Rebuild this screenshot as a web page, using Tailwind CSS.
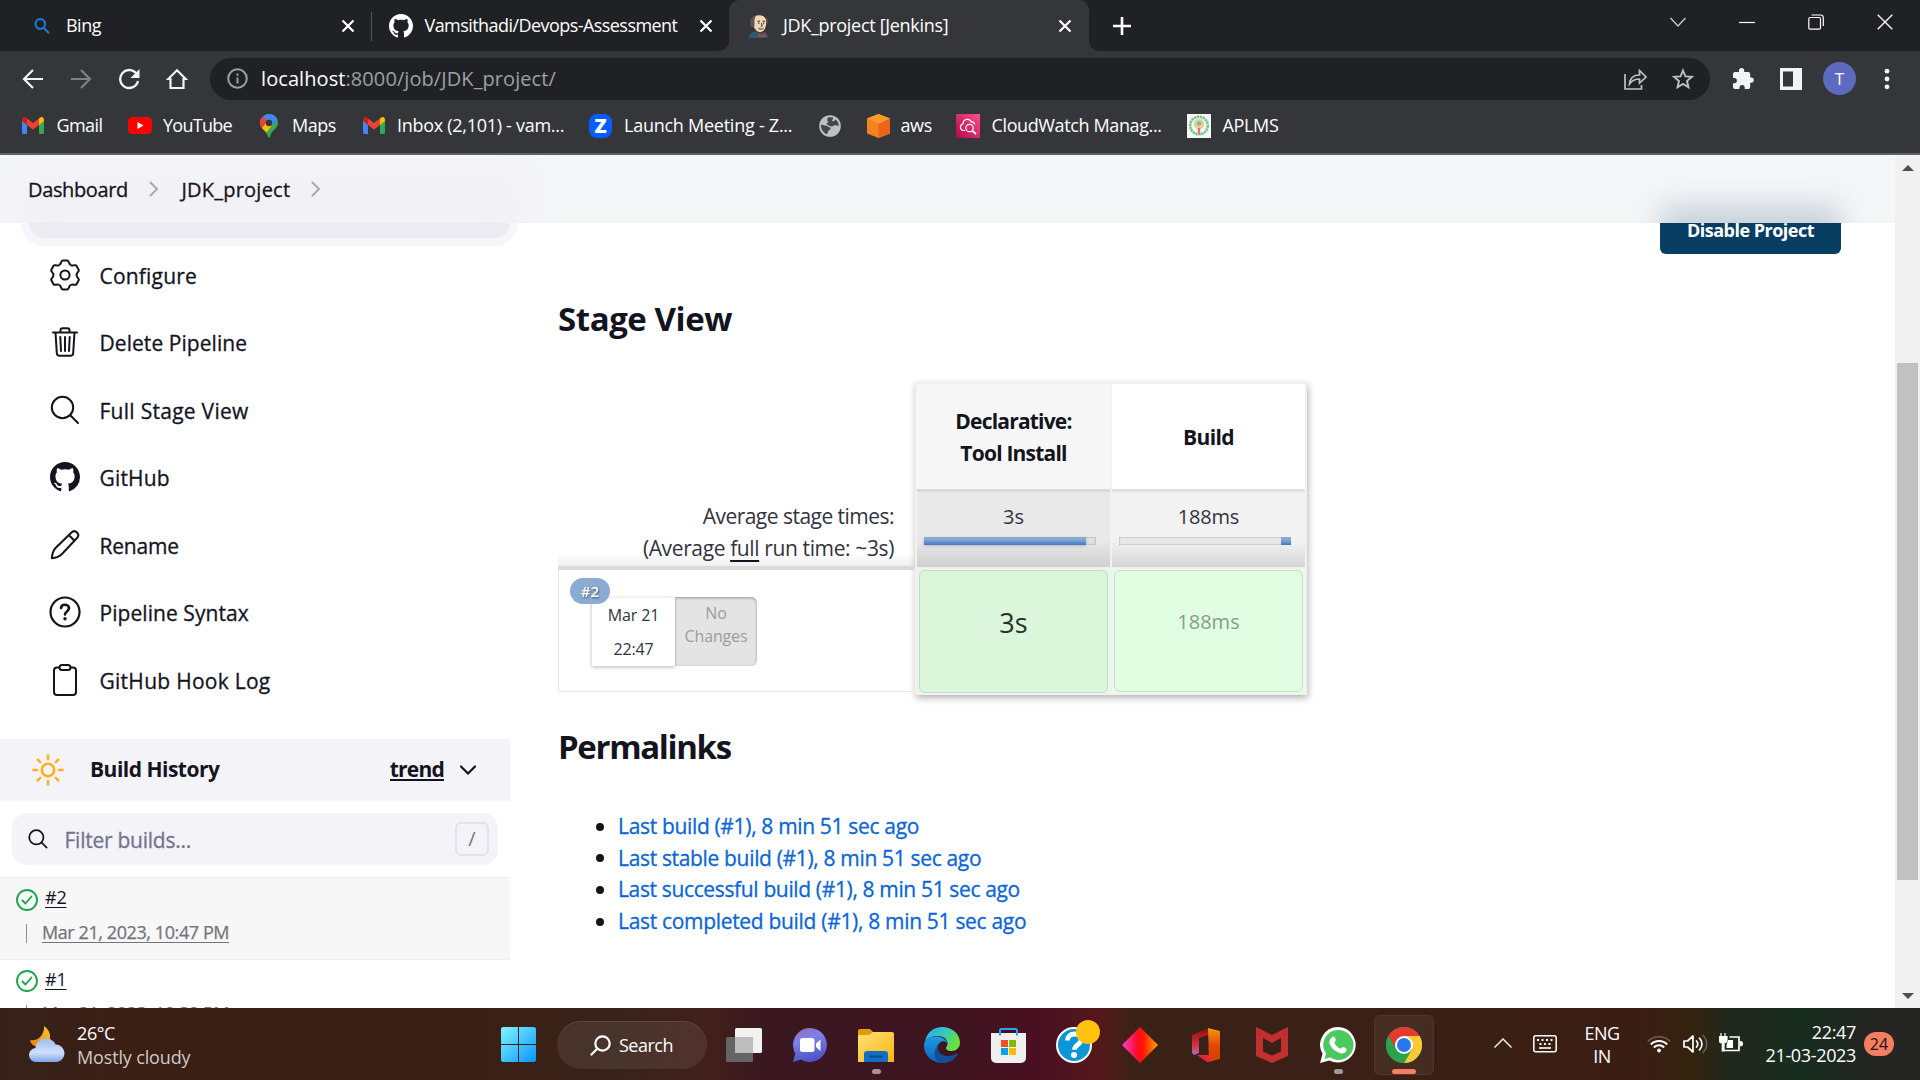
<!DOCTYPE html>
<html lang="en">
<head>
<meta charset="utf-8">
<title>JDK_project [Jenkins]</title>
<script src="https://cdn.jsdelivr.net/npm/@tailwindcss/browser@4"></script>
</head>
<body class="w-[1920px] h-[1080px] overflow-hidden flex flex-col bg-white font-['Open_Sans','Noto_Sans',sans-serif] text-[#14141f]">

<svg class="hidden">
  <symbol id="github" viewBox="0 0 16 16"><path fill="currentColor" d="M8 0C3.58 0 0 3.58 0 8c0 3.54 2.29 6.53 5.47 7.59.4.07.55-.17.55-.38 0-.19-.01-.82-.01-1.49-2.01.37-2.53-.49-2.69-.94-.09-.23-.48-.94-.82-1.13-.28-.15-.68-.52-.01-.53.63-.01 1.08.58 1.23.82.72 1.21 1.87.87 2.33.66.07-.52.28-.87.51-1.07-1.78-.2-3.64-.89-3.64-3.95 0-.87.31-1.59.82-2.15-.08-.2-.36-1.02.08-2.12 0 0 .67-.21 2.2.82.64-.18 1.32-.27 2-.27s1.36.09 2 .27c1.53-1.04 2.2-.82 2.2-.82.44 1.1.16 1.92.08 2.12.51.56.82 1.27.82 2.15 0 3.07-1.87 3.75-3.65 3.95.29.25.54.73.54 1.48 0 1.07-.01 1.93-.01 2.2 0 .21.15.46.55.38A8.01 8.01 0 0 0 16 8c0-4.42-3.58-8-8-8z"/></symbol>
  <symbol id="gmail" viewBox="0 0 22 17">
    <path fill="#4285f4" d="M0 3v12.500C0 16.300.700 17 1.500 17H5V7z"/>
    <path fill="#34a853" d="M22 3v12.500c0 .800-.700 1.500-1.500 1.500H17V7z"/>
    <path fill="#c5221f" d="M0 2.500C0 .300 2.400-.700 4 .600L5 1.500V8L0 4z"/>
    <path fill="#fbbc04" d="M22 2.500C22 .300 19.600-.700 18 .600L17 1.500V8l5-4z"/>
    <path fill="#ea4335" d="M5 1.500l6 4.600 6-4.600V8l-6 4.500L5 8z"/>
  </symbol>
  <symbol id="x" viewBox="0 0 14 14"><path d="M1.500 1.500l11 11M12.500 1.500l-11 11" stroke="#fff" stroke-width="2.200" fill="none"/></symbol>
  <symbol id="lens" viewBox="0 0 30 30"><g fill="none" stroke="currentColor" stroke-linecap="round"><circle cx="12.500" cy="12.500" r="10.700"/><path d="M20.500 20.500l7.500 7.500"/></g></symbol>
  <symbol id="ok" viewBox="0 0 22 22"><g fill="none" stroke="#1ea64b" stroke-width="1.900" stroke-linecap="round" stroke-linejoin="round"><circle cx="11" cy="11" r="10"/><path d="M6.500 11.500l3 3 6-7"/></g></symbol>
  <symbol id="sep" viewBox="0 0 10 16"><path d="M1.500 1.500L8 8l-6.500 6.500" fill="none" stroke="#a9a7bb" stroke-width="2" stroke-linecap="round"/></symbol>
</svg>

<!-- Tab strip -->
<div class="h-[51px] shrink-0 bg-[#202124] flex text-white text-[18px] whitespace-nowrap">
  <div class="w-[371px] flex items-center pl-[34px] pr-[16px]">
    <svg class="w-[16px] h-[16px] mr-[16px]" viewBox="0 0 16 16" fill="none" stroke="#1a78d0" stroke-width="2.200"><circle cx="6.300" cy="6" r="4.800"/><path d="M9.500 9.800l5.500 5.400"/></svg>
    <span class="flex-1 tracking-[-0.028em]">Bing</span>
    <svg class="w-[14px] h-[14px]"><use href="#x"/></svg>
  </div>
  <div class="w-px h-[29px] self-center bg-[#56585c] mt-px"></div>
  <div class="w-[357px] flex items-center pl-[17px] pr-[16px]">
    <svg class="w-[24px] h-[24px] mr-[11.500px]"><use href="#github"/></svg>
    <span class="flex-1 tracking-[-0.031em]">Vamsithadi/Devops-Assessment</span>
    <svg class="w-[14px] h-[14px]"><use href="#x"/></svg>
  </div>
  <div class="w-[360px] relative flex items-center bg-[#35363a] rounded-t-[10px] pl-[19px] pr-[17px]">
    <svg class="absolute -left-[10px] bottom-0 w-[10px] h-[10px]" viewBox="0 0 10 10"><path d="M10 0v10H0A10 10 0 0 0 10 0z" fill="#35363a"/></svg>
    <svg class="absolute -right-[10px] bottom-0 w-[10px] h-[10px]" viewBox="0 0 10 10"><path d="M0 0v10h10A10 10 0 0 1 0 0z" fill="#35363a"/></svg>
    <svg class="w-[22px] h-[24px] mr-[13px]" viewBox="0 0 22 24">
      <path d="M1 24c0-4 3-6 6-6.500l8 0c3 .5 5 2.500 5 6.500z" fill="#2f5873"/>
      <path d="M4 9C3 4 6 .8 11 .8c5.500 0 8 3.200 7.700 8-.2 5-2 9-6 9.700C8.500 19 5 14 4 9z" fill="#f0d6b7" stroke="#2a2422" stroke-width=".9"/>
      <path d="M3.500 13.500C.5 7 3 2 8.500 1 6 4 6.500 8 6.500 12z" fill="#5d5350"/>
      <path d="M18.200 4c1 2 .9 4 .6 6" stroke="#5d5350" stroke-width="1.600" fill="none"/>
      <path d="M9.500 7.500l2.500-.6M14.500 7l2.500.4M10 9.200h1.500M15 9.200h1.300M13.500 9l.8 3-1.500.3M10.500 14.500c2 1 4 .6 5-.4" stroke="#3a2f2a" stroke-width="1" fill="none"/>
      <path d="M10 19.500l3.500 1.700 3.500-2 .6 4-3.800-1-3.500 1.300z" fill="#d33833"/>
    </svg>
    <span class="flex-1 tracking-[-0.017em]">JDK_project [Jenkins]</span>
    <svg class="w-[14px] h-[14px]"><use href="#x"/></svg>
  </div>
  <div class="flex-1 flex items-center pl-[23px]">
    <svg class="w-[20px] h-[20px]" viewBox="0 0 20 20"><path d="M10 1v18M1 10h18" stroke="#fff" stroke-width="2.600"/></svg>
  </div>
  <div class="flex items-center gap-[53px] pr-[27px] pb-[8px]">
    <svg class="w-[16px] h-[16px]" viewBox="0 0 16 16"><path d="M.5 4L8 12l7.500-8" stroke="#cfcfd1" stroke-width="1.200" fill="none"/></svg>
    <svg class="w-[16px] h-[16px]" viewBox="0 0 16 16"><path d="M0 8.500h16" stroke="#fff" stroke-width="1.200"/></svg>
    <svg class="w-[16px] h-[16px]" viewBox="0 0 16 16" fill="none" stroke="#fff" stroke-width="1.200"><rect x=".8" y="3.500" width="11.700" height="11.700" rx="1.500"/><path d="M3.500 1h9a2.800 2.800 0 0 1 2.800 2.800V12"/></svg>
    <svg class="w-[16px] h-[16px]" viewBox="0 0 16 16"><path d="M.7.7l14.600 14.600M15.300.7L.7 15.300" stroke="#fff" stroke-width="1.300"/></svg>
  </div>
</div>

<!-- Toolbar -->
<div class="h-[55px] shrink-0 bg-[#35363a] flex items-center">
  <div class="w-[210px] flex items-center gap-[26px] pl-[22px]">
    <svg class="w-[22px] h-[22px]" viewBox="0 0 22 22" fill="none" stroke="#f1f3f4" stroke-width="2.200"><path d="M21 11H3M11 2l-9 9 9 9"/></svg>
    <svg class="w-[22px] h-[22px]" viewBox="0 0 22 22" fill="none" stroke="#7f8185" stroke-width="2.200"><path d="M1 11h18M11 2l9 9-9 9"/></svg>
    <svg class="w-[22px] h-[22px]" viewBox="0 0 22 22"><path d="M19 6.500A9 9 0 1 0 20 13" fill="none" stroke="#f1f3f4" stroke-width="2.400"/><path d="M21.500 1v9h-9z" fill="#f1f3f4"/></svg>
    <svg class="w-[22px] h-[22px]" viewBox="0 0 22 22"><path d="M4.500 20V11H2.200L11 2.200 19.800 11h-2.300v9z" fill="none" stroke="#f1f3f4" stroke-width="2.200"/></svg>
  </div>
  <div class="w-[1500px] h-[42px] rounded-full bg-[#202124] flex items-center pl-[17px] pr-[16px]">
    <svg class="w-[21px] h-[21px] mr-[13px]" viewBox="0 0 21 21" fill="none" stroke="#9aa0a6" stroke-width="2"><circle cx="10.500" cy="10.500" r="9.300"/><path d="M10.500 9.500v6M10.500 5.500v2.200"/></svg>
    <div class="flex-1 text-[20px] text-[#9aa0a6] tracking-[0.004em]"><span class="text-white">localhost</span>:8000/job/JDK_project/</div>
    <svg class="w-[23px] h-[22px] mr-[25px]" viewBox="0 0 23 22" fill="none" stroke="#bdc1c6" stroke-width="1.700"><path d="M1 6v15h16.500v-4"/><path d="M5.500 16C6 10 9.500 7 15.500 7V2.500L22 9l-6.500 6V11C11 11 8 12.500 5.500 16z"/></svg>
    <svg class="w-[22px] h-[22px]" viewBox="0 0 22 22"><path d="M11 2.500l2.500 5.900 6.300.5-4.800 4.100 1.500 6.200L11 15.900l-5.500 3.300L7 13 2.200 8.900l6.300-.5z" fill="none" stroke="#bdc1c6" stroke-width="1.900"/></svg>
  </div>
  <div class="flex items-center pl-[22px]">
    <svg class="w-[22px] h-[22px] mr-[26px] -mt-[2px]" viewBox="0 0 22 22" fill="#f1f3f4"><path d="M7 3.500a2.600 2.600 0 0 1 5.200 0V5h4a2 2 0 0 1 2 2v3.500h1a2.600 2.600 0 0 1 0 5.200h-1V20a2 2 0 0 1-2 2h-3.500v-1.500a2.600 2.600 0 0 0-5.200 0V22H3a2 2 0 0 1-2-2v-3.800h1.300a2.600 2.600 0 0 0 0-5.200H1V7a2 2 0 0 1 2-2h4z"/></svg>
    <svg class="w-[22px] h-[22px] mr-[21px]" viewBox="0 0 22 22"><rect x="0" y="0" width="22" height="22" fill="#f1f3f4"/><rect x="3" y="3.500" width="10" height="15" fill="#35363a"/></svg>
    <div class="size-[33px] rounded-full bg-[#5c6bc0] text-white text-[17px] flex items-center justify-center">T</div>
    <svg class="w-[6px] h-[22px] ml-[28px]" viewBox="0 0 6 22" fill="#f1f3f4"><circle cx="3" cy="3.200" r="2.400"/><circle cx="3" cy="11" r="2.400"/><circle cx="3" cy="18.800" r="2.400"/></svg>
  </div>
</div>

<!-- Bookmarks -->
<div class="h-[49px] shrink-0 bg-[#35363a] border-b-2 border-[#5f6166] flex items-center pl-[22px] pb-[8px] text-white text-[18px] whitespace-nowrap">
  <div class="w-[106px] flex items-center gap-[12.500px] tracking-[-0.032em]"><svg class="w-[22px] h-[17px]"><use href="#gmail"/></svg>Gmail</div>
  <div class="w-[132px] flex items-center gap-[11px] tracking-[-0.040em]"><svg class="w-[24px] h-[17px]" viewBox="0 0 24 17"><rect width="24" height="17" rx="4.500" fill="#f00"/><path d="M9.500 5v7l6-3.500z" fill="#fff"/></svg>YouTube</div>
  <div class="w-[103px] flex items-center gap-[14px] tracking-[-0.025em]">
    <svg class="w-[18px] h-[24px]" viewBox="0 0 18 24"><defs><clipPath id="pin"><path d="M9 0a9 9 0 0 1 9 9c0 6-7 7-8 14-.2 1-1.800 1-2 0C7 16 0 15 0 9a9 9 0 0 1 9-9z"/></clipPath></defs><g clip-path="url(#pin)"><rect width="18" height="24" fill="#34a853"/><path d="M0 0h18L3 18 0 14z" fill="#4285f4"/><path d="M0 5l3-3 6 7-7 8-2-2z" fill="#ea4335"/><path d="M1 15L14 0l4 4L6 19z" fill="#fbbc04"/><path d="M5 0h13v5l-6 7-6-7z" fill="#4285f4"/></g><circle cx="9" cy="9" r="3.200" fill="#35363a"/></svg>Maps</div>
  <div class="w-[226px] flex items-center gap-[12px] tracking-[-0.016em]"><svg class="w-[22px] h-[17px]"><use href="#gmail"/></svg>Inbox (2,101) - vam...</div>
  <div class="w-[230px] flex items-center gap-[12px] tracking-[-0.014em]"><span class="w-[23px] h-[24px] rounded-[8px] bg-[#0b5cff] text-[20px] leading-none font-extrabold flex items-center justify-center">Z</span>Launch Meeting - Z...</div>
  <svg class="w-[22px] h-[22px] mr-[26px]" viewBox="0 0 22 22"><circle cx="11" cy="11" r="10.800" fill="#bdc1c6"/><path d="M2 9.500l5 1.300c2 .3 2.500 1.500 4.200 1.700.8 1.500-.2 2.500-1.700 3-.5 1.300-.7 2.300-1.500 3.800C4.200 18 1.700 14 2 9.500zM9.500 2.200l4.500.4c.8 1.200-.8 2-1 3.200.9 1 2.800 0 3.500-1.300 2.200 1.500 3.500 4 3.300 6.500-1.300-.6-2.600-1-4.300-.8-1.500.3-1.500 1.300-3 1.200-1.800-.2-3-1-4.600-1.900-1-.8.400-1.800 1.600-2.200C8.200 6 7.500 3.500 9.500 2.200z" fill="#45474b"/></svg>
  <div class="w-[89px] flex items-center gap-[10.500px] tracking-[-0.022em]"><svg class="w-[23px] h-[24px]" viewBox="0 0 23 24"><path d="M11.500 0L23 4.500v15L11.500 24 0 19.500v-15z" fill="#f58220"/><path d="M11.500 0L23 4.500 11.500 10 0 4.500z" fill="#fa9a2c"/><path d="M11.500 10L23 4.500v15L11.500 24z" fill="#ea641a"/></svg>aws</div>
  <div class="w-[231px] flex items-center gap-[11.500px] tracking-[-0.021em]"><svg class="w-[24px] h-[24px]" viewBox="0 0 24 24"><defs><linearGradient id="cw" x1="0" y1="1" x2="1" y2="0"><stop stop-color="#b0084d"/><stop offset="1" stop-color="#ff4f8b"/></linearGradient></defs><rect width="24" height="24" fill="url(#cw)"/><g fill="none" stroke="#fff" stroke-width="1.200"><path d="M9 16.500H7.500a3.300 3.300 0 0 1-.5-6.500c0-5 6.500-6.500 8.300-2 2-.5 3.200.8 3.200 2.500"/><circle cx="13.500" cy="14" r="3.700"/><path d="M16.200 16.800L20 20" stroke-width="1.800"/></g></svg>CloudWatch Manag...</div>
  <div class="flex items-center gap-[11.500px] tracking-[-0.019em]"><svg class="w-[24px] h-[24px]" viewBox="0 0 24 24"><rect width="24" height="24" fill="#f8f8f4"/><circle cx="12" cy="11.500" r="8.800" fill="none" stroke="#6cc896" stroke-width="2.600" stroke-dasharray="2.400 .6"/><circle cx="12" cy="10" r="5.300" fill="#eccba0"/><circle cx="12" cy="9.500" r="2.300" fill="#7ec08a"/><path d="M10.800 14h2.400v6h-2.400z" fill="#e4786c"/></svg>APLMS</div>
</div>

<!-- Page -->
<div class="h-[853px] shrink-0 relative isolate flex overflow-hidden bg-white">
  <!-- Sidebar -->
  <div class="w-[510px] shrink-0 flex flex-col">
    <div class="h-[86px] shrink-0 flex pl-[28.500px]"><div class="w-[481.500px] h-[83px] shrink-0 rounded-[15px] bg-[#ebecf2] shadow-[0_0_0_8px_#f6f6fa]"></div></div>
    <nav class="text-[21px] text-[#14141f] flex flex-col whitespace-nowrap">
      <a class="h-[67.500px] flex items-center gap-[19.500px] pl-[50px] tracking-[0.009em]"><svg class="w-[30px] h-[32px]" viewBox="-15 -16 30 32"><defs><path id="lobe" d="M-5.750-9.960Q-4.600-10.600-3.900-12.600Q-3.400-14.500-2.200-14.500L2.200-14.500Q3.400-14.500 3.900-12.600Q4.600-10.600 5.750-9.960"/></defs><g fill="none" stroke="#14141f" stroke-width="2"><use href="#lobe"/><use href="#lobe" transform="rotate(60)"/><use href="#lobe" transform="rotate(120)"/><use href="#lobe" transform="rotate(180)"/><use href="#lobe" transform="rotate(240)"/><use href="#lobe" transform="rotate(300)"/><circle r="4.600"/></g></svg><span class="pt-[4px] [-webkit-text-stroke:0.300px]">Configure</span></a>
      <a class="h-[67.500px] flex items-center gap-[19.500px] pl-[50px] tracking-[0.003em]"><svg class="w-[30px] h-[30px]" viewBox="0 0 30 30" fill="none" stroke="#14141f" stroke-width="2" stroke-linecap="round" stroke-linejoin="round"><path d="M3 5.500h24M5.500 5.500l1.300 20.500c.1 1.700 1 2.800 2.700 2.800h11c1.700 0 2.600-1.100 2.700-2.800L24.500 5.500M10.500 5.500V3.300C10.500 2 11.300 1.200 12.500 1.200h5c1.200 0 2 .8 2 2.100v2.200M15 10v14M10.300 10l.7 14M19.700 10l-.7 14"/></svg><span class="pt-[3px] [-webkit-text-stroke:0.300px]">Delete Pipeline</span></a>
      <a class="h-[67.500px] flex items-center gap-[19.500px] pl-[50px] tracking-[0.013em]"><svg class="w-[30px] h-[30px] stroke-2"><use href="#lens"/></svg><span class="pt-[4px] [-webkit-text-stroke:0.300px]">Full Stage View</span></a>
      <a class="h-[67.500px] flex items-center gap-[19.500px] pl-[50px] tracking-[0.008em]"><svg class="w-[30px] h-[30px]"><use href="#github"/></svg><span class="pt-[3px] [-webkit-text-stroke:0.300px]">GitHub</span></a>
      <a class="h-[67.500px] flex items-center gap-[19.500px] pl-[50px] tracking-[-0.010em]"><svg class="w-[30px] h-[30px]" viewBox="0 0 30 30" fill="none" stroke="#14141f" stroke-width="2" stroke-linecap="round" stroke-linejoin="round"><path d="M1.800 28.200C2.200 24 3.200 20.500 5.500 18L21.500 2.500c1.800-1.700 4-1.500 5.500 0s1.700 3.700 0 5.500L12 24c-2.500 2.500-6 3.800-10.200 4.200zM19 5.200l5.500 5.500"/></svg><span class="pt-[4px] [-webkit-text-stroke:0.300px]">Rename</span></a>
      <a class="h-[67.500px] flex items-center gap-[18.500px] pl-[49px] tracking-[0.003em]"><svg class="w-[32px] h-[32px]" viewBox="0 0 32 32" fill="none" stroke="#14141f" stroke-width="2.200" stroke-linecap="round"><circle cx="16" cy="16" r="14.500"/><path d="M12 12c.2-2 1.700-3.300 4-3.300s4 1.400 4 3.400c0 3.400-4 3.200-4 6.400" stroke-width="2.600"/><circle cx="16" cy="22.800" r=".8" fill="#14141f" stroke-width="1.800"/></svg><span class="pt-[3px] [-webkit-text-stroke:0.300px]">Pipeline Syntax</span></a>
      <a class="h-[67px] flex items-center gap-[19.500px] pl-[50px] tracking-[0.013em]"><svg class="w-[30px] h-[32px]" viewBox="0 0 30 32" fill="none" stroke="#14141f" stroke-width="2" stroke-linejoin="round"><path d="M9.500 3.500H7a3 3 0 0 0-3 3V28a3 3 0 0 0 3 3h16a3 3 0 0 0 3-3V6.500a3 3 0 0 0-3-3h-2.500"/><rect x="9.500" y="1" width="11" height="5" rx="2.500"/></svg><span class="pt-[4px] [-webkit-text-stroke:0.300px]">GitHub Hook Log</span></a>
    </nav>
    <div class="h-[62px] mt-[26px] shrink-0 bg-[#f3f3f8] flex items-center pl-[32px] pr-[34px] text-[21px] font-bold whitespace-nowrap">
      <svg class="w-[32px] h-[32px] mr-[26px]" viewBox="0 0 32 32" fill="none" stroke="#ffb020" stroke-width="2.600" stroke-linecap="round"><circle cx="16" cy="16" r="6.200"/><path d="M16 1.500v3.500M16 27v3.500M1.500 16H5M27 16h3.500M5.700 5.700l2.500 2.500M23.800 23.800l2.500 2.500M5.700 26.300l2.500-2.500M23.800 8.200l2.500-2.500"/></svg>
      <span class="flex-1 tracking-[-0.024em] -mt-px">Build History</span>
      <span class="tracking-[-0.036em] border-b-2 border-[#14141f] leading-[20px] -mt-px mr-[16px]">trend</span>
      <svg class="w-[16px] h-[10px]" viewBox="0 0 16 10"><path d="M1 1.500l7 7 7-7" fill="none" stroke="#14141f" stroke-width="2.200" stroke-linecap="round"/></svg>
    </div>
    <div class="h-[52px] mt-[12px] ml-[12px] w-[486px] shrink-0 rounded-[15px] bg-[#f3f3f8] flex items-center pl-[16px] pr-[9px]">
      <svg class="w-[20px] h-[20px] stroke-[2.600]"><use href="#lens"/></svg>
      <span class="flex-1 ml-[16.500px] pt-[4px] text-[21px] tracking-[-0.012em] text-[#75738c] [-webkit-text-stroke:0.300px]">Filter builds...</span>
      <span class="w-[34px] h-[34px] rounded-[6px] border-2 border-[#e3e2ee] text-[20px] text-[#75738c] flex items-center justify-center">/</span>
    </div>
    <div class="h-[83px] mt-[12px] shrink-0 bg-[#f7f7f8] border-y border-[#efeff0] pl-[16px] pt-[8px] text-[18px]">
      <div class="h-[28px] flex items-center gap-[7px]"><svg class="w-[22px] h-[22px]"><use href="#ok"/></svg><span class="tracking-[-0.012em] underline underline-offset-[3px] mt-[-5px]">#2</span></div>
      <div class="h-[38px] flex items-center pl-[10px]"><i class="w-px h-[19px] bg-[#8f8f9a] mr-[15px]"></i><span class="tracking-[-0.023em] underline underline-offset-[3px] mt-[-2px] text-[#737378] [-webkit-text-stroke:0.250px]">Mar 21, 2023, 10:47 PM</span></div>
    </div>
    <div class="h-[48px] shrink-0 overflow-hidden pl-[16px] pt-[7px] text-[18px]">
      <div class="h-[28px] flex items-center gap-[7px]"><svg class="w-[22px] h-[22px]"><use href="#ok"/></svg><span class="tracking-[-0.012em] underline underline-offset-[3px] mt-[-4px]">#1</span></div>
      <div class="h-[38px] flex items-center pl-[10px]"><i class="w-px h-[19px] bg-[#8f8f9a] mr-[15px]"></i><span class="tracking-[-0.023em] underline underline-offset-[3px] mt-[-2px] text-[#737378] [-webkit-text-stroke:0.250px]">Mar 21, 2023, 10:39 PM</span></div>
    </div>
  </div>

  <!-- Main panel -->
  <main class="w-[1385px] shrink-0 pl-[48px] flex flex-col">
    <div class="h-[99px] shrink-0 flex justify-end items-end pr-[54px]">
      <button class="w-[181px] h-[49px] rounded-[6px] bg-[#073e62] text-white text-[18px] font-bold tracking-[-0.028em] pt-[2px]">Disable Project</button>
    </div>
    <h2 class="h-[44px] mt-[43px] shrink-0 text-[33px] leading-[44px] font-bold tracking-[-0.013em]">Stage View</h2>

    <div class="mt-[41px] h-[313px] shrink-0 flex items-start">
      <div class="w-[357px] flex flex-col">
        <div class="h-[110px]"></div>
        <div class="h-[74px] bg-linear-to-b from-white from-82% to-[#efefef] text-[21px] leading-[31.500px] text-right pr-[21px] pt-[9px] font-normal text-[#333340] whitespace-nowrap">
          <p class="tracking-[-0.025em]">Average stage times:</p>
          <p class="tracking-[-0.018em]">(Average <span class="underline decoration-2 underline-offset-[4px] decoration-[#14141f]">full</span> run time: ~3s)</p>
        </div>
        <div class="h-[126px] border border-t-4 border-[#e8e8e8] border-t-[#d9d9d9] relative">
          <div class="absolute left-[33px] top-[28px] flex text-center">
            <div class="w-[83px] h-[68px] bg-white shadow-[0_1px_4px_rgba(0,0,0,.3)] text-[16px] leading-[34px] tracking-[-0.010em] text-[#333340]"><p>Mar 21</p><p>22:47</p></div>
            <div class="w-[82px] h-[69px] -mt-px rounded-r-[6px] bg-[#e4e4e4] shadow-[inset_0_1px_3px_rgba(0,0,0,.35)] text-[16px] leading-[23px] tracking-[-0.010em] text-[#9c9c9c] pt-[5px]"><p>No</p><p>Changes</p></div>
          </div>
          <span class="absolute left-[11px] top-[8px] w-[40px] h-[26px] rounded-full bg-[#8aacd3] text-white text-[15px] font-semibold flex items-center justify-center text-shadow-[1px_1px_2px_rgba(0,0,0,.5)]">#2</span>
        </div>
      </div>

      <div class="w-[392px] h-[313px] border-2 border-[#f1f1f1] bg-[#f1f1f1] shadow-[1px_3px_7px_rgba(0,0,0,.3)] flex gap-[2px] text-center">
        <div class="w-[193px] flex flex-col">
          <div class="h-[108px] bg-[#f7f7f7] border-b-3 border-[#dadada] text-[21px] leading-[32px] font-bold tracking-[-0.038em] pt-[21px]"><p>Declarative:</p><p>Tool Install</p></div>
          <div class="h-[75px] bg-linear-to-b from-[#e9e9e9] from-65% to-[#cfcfcf] px-[7px] text-[#333340]">
            <p class="text-[20px] leading-[50px] h-[45px]">3s</p>
            <div class="w-[172px] h-[8px] bg-[#e0e0e0] shadow-[inset_0_0_2px_rgba(0,0,0,.4)]"><div class="w-[162px] h-[8px] bg-linear-to-b from-[#86abd6] from-30% to-[#4577c6] shadow-[0_1px_3px_rgba(0,0,0,.2)]"></div></div>
          </div>
          <div class="mt-[2px] flex-1 bg-[#e6f9e6] px-[2px] pt-px"><div class="h-[123px] rounded-[6px] border border-[#ccd8cc] bg-[#dcf6dc] text-[27px] text-[#26322a] leading-[104px]">3s</div></div>
        </div>
        <div class="w-[193px] flex flex-col">
          <div class="h-[108px] bg-white border-b-3 border-[#e2e2e2] text-[21px] font-bold tracking-[-0.030em] leading-[107px]">Build</div>
          <div class="h-[75px] bg-linear-to-b from-[#f2f2f2] from-65% to-[#d6d6d6] px-[7px] text-[#333340]">
            <p class="text-[20px] leading-[50px] h-[45px] tracking-[-0.010em]">188ms</p>
            <div class="w-[172px] h-[8px] bg-[#e8e8e8] shadow-[inset_0_0_2px_rgba(0,0,0,.4)] flex justify-end"><div class="w-[10px] h-[8px] bg-linear-to-b from-[#86abd6] from-30% to-[#4577c6]"></div></div>
          </div>
          <div class="mt-[2px] flex-1 bg-[#e6fde6] px-[2px] pt-px"><div class="h-[122px] rounded-[6px] border border-[#ccdccc] bg-[#e2fee2] text-[20px] text-[#8a9a8c] leading-[102px]">188ms</div></div>
        </div>
      </div>
    </div>

    <h2 class="h-[44px] mt-[30px] shrink-0 text-[33px] leading-[44px] font-bold tracking-[-0.041em]">Permalinks</h2>
    <ul class="mt-[42px] pl-[38px] text-[21px] leading-[31.600px] text-[#0b66d6] whitespace-nowrap [-webkit-text-stroke:0.300px]">
      <li class="flex items-center gap-[14px]"><i class="size-[8px] rounded-full bg-[#14141f]"></i><span class="tracking-[-0.016em]">Last build (#1), 8 min 51 sec ago</span></li>
      <li class="flex items-center gap-[14px]"><i class="size-[8px] rounded-full bg-[#14141f]"></i><span class="tracking-[-0.016em]">Last stable build (#1), 8 min 51 sec ago</span></li>
      <li class="flex items-center gap-[14px]"><i class="size-[8px] rounded-full bg-[#14141f]"></i><span class="tracking-[-0.017em]">Last successful build (#1), 8 min 51 sec ago</span></li>
      <li class="flex items-center gap-[14px]"><i class="size-[8px] rounded-full bg-[#14141f]"></i><span class="tracking-[-0.015em]">Last completed build (#1), 8 min 51 sec ago</span></li>
    </ul>
  </main>

  <!-- Scrollbar -->
  <div class="w-[25px] shrink-0 bg-[#f1f1f1] flex flex-col items-center pt-[10px] pb-[9px]">
    <svg class="w-[12px] h-[6px] shrink-0" viewBox="0 0 12 6"><path d="M0 6l6-6 6 6z" fill="#505050"/></svg>
    <div class="w-[21px] h-[517px] mt-[192px] bg-[#c1c1c1]"></div>
    <svg class="w-[12px] h-[6px] shrink-0 mt-auto" viewBox="0 0 12 6"><path d="M0 0l6 6 6-6z" fill="#505050"/></svg>
  </div>

  <!-- Sticky breadcrumbs over the scrolled page: an opaque bar with the soft glow of the button scrolled beneath it -->
  <div class="absolute left-0 top-0 w-[1895px] h-[68px] overflow-hidden bg-[#f5f6f8] flex items-center pl-[28px] pb-px text-[20px] whitespace-nowrap">
    <div class="absolute left-[20px] top-[20px] w-[500px] h-[70px] bg-[#f1f0f5] blur-[18px]"></div>
    <div class="absolute left-[1660px] top-[50px] w-[181px] h-[60px] bg-[#c8d2da] blur-[14px]"></div>
    <span class="relative w-[121px] tracking-[-0.018em] pt-[3px] [-webkit-text-stroke:0.300px]">Dashboard</span>
    <svg class="relative w-[10px] h-[16px] mr-[22.500px]"><use href="#sep"/></svg>
    <span class="relative w-[129.500px] tracking-[0.011em] pt-[3px] [-webkit-text-stroke:0.300px]">JDK_project</span>
    <svg class="relative w-[10px] h-[16px]"><use href="#sep"/></svg>
  </div>
</div>

<!-- Taskbar -->
<footer class="h-[72px] shrink-0 flex items-center text-white text-[18px] whitespace-nowrap bg-[linear-gradient(90deg,#36211a_0px,#3a1f15_120px,#3a1f15_480px,#38231a_620px,#42201a_710px,#3a1820_760px,#3e1420_960px,#4a1022_1040px,#54181a_1100px,#3a2217_1135px,#3a2016_1300px,#3a1e14_1640px,#34230f_1690px,#20281c_1730px,#182d1f_1800px,#252523_1880px)]">
  <div class="w-[485px] flex items-center pl-[29px]">
    <svg class="w-[36px] h-[36px] mr-[12px]" viewBox="0 0 36 36"><defs><linearGradient id="moon" x1="0" y1="1" x2="1" y2="0"><stop stop-color="#f07f13"/><stop offset="1" stop-color="#fbc531"/></linearGradient><linearGradient id="cl" x1="0" y1="0" x2="0" y2="1"><stop stop-color="#9fbdf0"/><stop offset=".6" stop-color="#cfe0fa"/><stop offset="1" stop-color="#7fa4e6"/></linearGradient></defs><path d="M1 14c7 2 15-5 14-14 9 6 8 18-2 21C7 22 2 19 1 14z" fill="url(#moon)"/><path d="M7.500 36a7 7 0 0 1-1-14 10.500 10.500 0 0 1 20-3.500A8.800 8.800 0 0 1 28 36z" fill="url(#cl)"/></svg>
    <div class="leading-[24px] pt-[2px]"><p class="tracking-[-0.023em]">26°C</p><p class="tracking-[-0.008em] text-[#cfc8c5]">Mostly cloudy</p></div>
  </div>
  <div class="w-[72px] pl-[16px]">
    <svg class="w-[35px] h-[35px] mt-px" viewBox="0 0 35 35"><defs><linearGradient id="win" x1="0" y1="0" x2="1" y2="1"><stop stop-color="#80f5ff"/><stop offset="1" stop-color="#0a94ff"/></linearGradient></defs><path fill="url(#win)" d="M1.500 0H17v17H0V1.500zM18 0h15.500L35 1.500V17H18zM0 18h17v17H1.500L0 33.500zM18 18h17v15.500L33.500 35H18z"/></svg>
  </div>
  <div class="w-[150px] h-[48px] mt-[2px] rounded-full bg-white/8 border-t border-white/10 flex items-center pl-[33px] mr-[4px]">
    <svg class="w-[21px] h-[21px] mr-[8px]" viewBox="0 0 21 21" fill="none" stroke="#fff" stroke-width="2.200" stroke-linecap="round"><circle cx="12.500" cy="8.500" r="7.200"/><path d="M7.200 13.800L1.500 19.500"/></svg>
    <span class="tracking-[-0.028em]">Search</span>
  </div>

  <!-- Task view -->
  <div class="w-[66px] flex justify-center"><svg class="w-[36px] h-[34px] mt-px" viewBox="0 0 36 34"><rect y="9" width="27" height="25" rx="1.500" fill="#646464"/><rect x="9" width="27" height="25" rx="1.500" fill="#f1f1f1"/><path d="M9 9h18v16H9z" fill="#bdbdbd"/></svg></div>
  <!-- Chat -->
  <div class="w-[66px] flex justify-center"><svg class="w-[34px] h-[34px] mt-[2px]" viewBox="0 0 34 34"><defs><linearGradient id="chat" x1="0" y1="0" x2=".3" y2="1"><stop stop-color="#9a6aa8"/><stop offset=".4" stop-color="#7b83eb"/><stop offset="1" stop-color="#5353c8"/></linearGradient></defs><path d="M17 0a17 17 0 1 1-9 31.500L0 34l2.300-8.500A17 17 0 0 1 17 0z" fill="url(#chat)"/><rect x="7" y="10" width="14.500" height="14" rx="2.500" fill="#fff"/><path d="M23 15.500l4.500-4v11.500l-4.500-4z" fill="#fff"/></svg></div>
  <!-- File explorer -->
  <div class="w-[66px] h-full flex flex-col items-center pt-[20px]"><svg class="w-[36px] h-[34px]" viewBox="0 0 36 34"><defs><linearGradient id="fold" x1="0" y1="0" x2="1" y2="1"><stop stop-color="#ffe07a"/><stop offset="1" stop-color="#f8b60f"/></linearGradient></defs><path d="M0 3a2 2 0 0 1 2-2h10l4 4-4 6H0z" fill="#e49b05"/><path d="M0 7h11l4-3h19a2 2 0 0 1 2 2v28H0z" fill="url(#fold)"/><path d="M6 34V26a3 3 0 0 1 3-3h18a3 3 0 0 1 3 3v8z" fill="#0f6fc4"/><path d="M11 28.500h14" stroke="#0a4d8c" stroke-width="2"/></svg><i class="w-[9px] h-[5px] rounded-full bg-[#a39397] mt-[7px]"></i></div>
  <!-- Edge -->
  <div class="w-[66px] flex justify-center"><svg class="w-[36px] h-[36px] mt-[2px]" viewBox="0 0 36 36"><defs><linearGradient id="e1" x1="0" y1="0" x2="1" y2=".5"><stop stop-color="#2ba6e8"/><stop offset=".5" stop-color="#33c6c6"/><stop offset="1" stop-color="#6be23a"/></linearGradient><linearGradient id="e2" x1="0" y1="0" x2="0" y2="1"><stop stop-color="#1b9de2"/><stop offset="1" stop-color="#0c60b8"/></linearGradient></defs><path d="M1 14C3 5 10 0 18 0c10 0 18 7 18 15.500 0 5.500-4 8.500-8.500 8.500-4 0-5.500-1.500-5.500-3 0-1 1.500-2 1.500-4.500C23.500 12 19 9 14 9 8 9 3 11 1 14z" fill="url(#e1)"/><path d="M1 14C3 10.500 7.500 9 13 9.500c6 .5 10 3.500 10.500 7C22 14 19 13.500 16.500 15 12 18 13 27 20 33l-2 3C8 36 0 28 0 19c0-2 .3-3.500 1-5z" fill="url(#e2)"/><path d="M14.500 17C12 22 15 28.500 23 29c4 .2 7-1 9.500-2.500 1-.5 1.600.2 1 1.200C30 33 25 36 18.500 36 10 35 8 24 14.500 17z" fill="#124f98"/></svg></div>
  <!-- Store -->
  <div class="w-[66px] flex justify-center"><svg class="w-[35px] h-[35px] mt-[2px]" viewBox="0 0 35 35"><path d="M9 8V2.500A1.500 1.500 0 0 1 10.500 1h14A1.500 1.500 0 0 1 26 2.500V8" fill="none" stroke="#2aa6ee" stroke-width="2"/><path d="M0 5h35v25a5 5 0 0 1-5 5H5a5 5 0 0 1-5-5z" fill="#efefef"/><path d="M9 4.500v3M26 4.500v3" stroke="#2aa6ee" stroke-width="2"/><path d="M10 12h7v7h-7z" fill="#f25022"/><path d="M18 12h7v7h-7z" fill="#7fba00"/><path d="M10 20h7v7h-7z" fill="#00a4ef"/><path d="M18 20h7v7h-7z" fill="#ffb900"/></svg></div>
  <!-- Help -->
  <div class="w-[66px] flex justify-center relative mt-[2px]"><svg class="w-[36px] h-[36px]" viewBox="0 0 36 36"><circle cx="18" cy="18" r="17" fill="#0a96d8" stroke="#fff" stroke-width="2"/><path d="M11.500 13.500c0-4 3-6.500 7-6.500s6.500 2.300 6.500 5.700c0 5-6.500 4.800-6.500 10" fill="none" stroke="#fff" stroke-width="4.800"/><circle cx="18" cy="28" r="3" fill="#fff"/></svg><i class="absolute left-[35px] -top-[7px] size-[24px] rounded-full bg-[#ffc20e]"></i></div>
  <!-- Diamond -->
  <div class="w-[66px] flex justify-center"><svg class="w-[36px] h-[36px] mt-px" viewBox="0 0 36 36"><defs><linearGradient id="dia"><stop stop-color="#ff3fd0"/><stop offset=".45" stop-color="#ff0a1e"/><stop offset=".6" stop-color="#ff1a00"/><stop offset="1" stop-color="#ffa800"/></linearGradient></defs><path d="M18 0l18 18-18 18L0 18z" fill="url(#dia)"/></svg></div>
  <!-- Office -->
  <div class="w-[66px] flex justify-center"><svg class="w-[28px] h-[34px] mt-[2px]" viewBox="0 0 28 34"><defs><linearGradient id="of1" x1="0" y1="0" x2="0" y2="1"><stop stop-color="#8a0c10"/><stop offset=".6" stop-color="#d1303a"/><stop offset="1" stop-color="#b36bc0"/></linearGradient><linearGradient id="of2" x1="0" y1="0" x2="0" y2="1"><stop stop-color="#f79a0a"/><stop offset=".5" stop-color="#e04a06"/><stop offset="1" stop-color="#d83b01"/></linearGradient></defs><path d="M0 7L16 0v7L7 10v15l-5 2-2-2z" fill="url(#of1)"/><path d="M16 0l12 3v28l-11 3z" fill="url(#of2)"/><path d="M5 27h12v7h-2z" fill="#e5243f"/></svg></div>
  <!-- McAfee -->
  <div class="w-[66px] flex justify-center"><svg class="w-[32px] h-[36px] mt-[2px]" viewBox="0 0 32 36"><path d="M0 0l16 8 16-8v29l-16 7-16-7zM7 11v13.500l9 4 9-4V11l-9 5z" fill="#c1302c" fill-rule="evenodd"/></svg></div>
  <!-- WhatsApp -->
  <div class="w-[66px] h-full flex flex-col items-center pt-[19px]"><svg class="w-[36px] h-[36px]" viewBox="0 0 36 36"><path d="M18 0a17.800 17.800 0 1 1-8.500 33.500L0 36l2.600-9.200A17.800 17.800 0 0 1 18 0z" fill="#fff"/><path d="M18.200 3a15 15 0 1 1-8 27.500L4.500 32l1.500-5.500A15 15 0 0 1 18.200 3z" fill="#4cc95e"/><path d="M12.500 10c1.500-1 2.300 0 3.200 2.800.5 1.600-1.700 2.200-1.200 3.200 1.300 2.600 3.200 4.500 5.800 5.600 1 .4 1.700-2.100 3-1.600 2.800 1.200 3.700 1.700 3.200 3.200-1 3.300-4.500 3.800-7.500 2.600-5-2-8-5-9.400-9-.9-2.800.5-5.300 2.900-6.800z" fill="#fff"/></svg><i class="w-[9px] h-[5px] rounded-full bg-[#a29a96] mt-[6px]"></i></div>
  <!-- Chrome -->
  <div class="w-[60px] h-[60px] ml-[3px] mt-[2px] rounded-[6px] bg-white/6 border border-white/6 flex flex-col items-center pt-[11px]"><svg class="w-[36px] h-[36px] shrink-0" viewBox="0 0 36 36"><circle cx="18" cy="18" r="18" fill="#2ba24c"/><path d="M18 18L2.400 9A18 18 0 0 1 33.600 9z" fill="#e33b2e"/><path d="M18 9h15.600A18 18 0 0 1 18 36l7.800-13.500z" fill="#fcc934"/><path d="M2.400 9l7.800 13.500L18 18V9z" fill="#e33b2e"/><path d="M2.400 9A18 18 0 0 0 18 36l7.800-13.500L18 18l-7.800 4.500z" fill="#2ba24c"/><circle cx="18" cy="18" r="9" fill="#fff"/><circle cx="18" cy="18" r="7" fill="#2a78ee"/></svg><i class="w-[24px] h-[5px] shrink-0 rounded-full bg-[#f47d62] mt-[6px]"></i></div>

  <!-- Tray -->
  <svg class="w-[18px] h-[10px] ml-[60px] mr-[21px] mt-[-2px]" viewBox="0 0 18 10"><path d="M.5 9.500L9 1l8.500 8.500" fill="none" stroke="#fff" stroke-width="1.400"/></svg>
  <svg class="w-[24px] h-[18px] mr-[25px]" viewBox="0 0 24 18" fill="none" stroke="#fff"><rect x=".8" y=".8" width="22.400" height="16" rx="2" stroke-width="1.500"/><path d="M4 5h16M6.500 9h11" stroke-width="1.900" stroke-dasharray="2 2.500"/><path d="M6 13h12" stroke-width="1.600"/></svg>
  <div class="w-[40px] text-center leading-[23.500px] pt-[2px] tracking-[-0.030em]"><p>ENG</p><p>IN</p></div>
  <svg class="w-[24px] h-[20px] ml-[25px] mr-[12px]" viewBox="0 0 24 20" fill="none" stroke="#fff" stroke-width="2"><path d="M.7 7.500a16 16 0 0 1 22.600 0" stroke="#6f5f57" stroke-width="1.500"/><path d="M3.800 10.500a11.600 11.600 0 0 1 16.400 0M6.800 13.500a7.300 7.300 0 0 1 10.400 0"/><circle cx="12" cy="16.500" r="1.500" fill="#fff" stroke-width="1"/></svg>
  <svg class="w-[25px] h-[20px] mr-[11px]" viewBox="0 0 25 20" fill="none" stroke="#fff" stroke-width="1.700" stroke-linejoin="round" stroke-linecap="round"><path d="M1 7h3.500L10 2v16l-5.500-5H1z"/><path d="M13.500 7c1.500 1.700 1.500 4.300 0 6M16.500 4.200c3.300 3.200 3.300 8.400 0 11.600"/><path d="M20 1.500c5 4.500 5 12.500 0 17" stroke="#6f5f57" stroke-width="1.500"/></svg>
  <svg class="w-[24px] h-[20px] -mt-[2px]" viewBox="0 0 24 20"><path d="M2 0v4M6 0v4M0 3.500h8V7a3.500 3.500 0 0 1-3 3v8H3.300v-8A3.500 3.500 0 0 1 0 7z" fill="#fff" stroke="#fff" stroke-width="1.200"/><path d="M10.500 4H20v13.500H5" fill="none" stroke="#fff" stroke-width="1.700"/><path d="M21 8c2.500 0 3 1 3 2.700s-.5 2.600-3 2.600z" fill="#fff"/><path d="M9 7h5v8H7.500v-3z" fill="#fff"/></svg>
  <div class="w-[113px] text-right leading-[23.500px] tracking-[-0.019em]"><p>22:47</p><p>21-03-2023</p></div>
  <span class="w-[30px] h-[24px] ml-[8px] rounded-full bg-[#f47d62] text-[#1c1310] text-[16px] flex items-center justify-center">24</span>
</footer>
</body>
</html>
